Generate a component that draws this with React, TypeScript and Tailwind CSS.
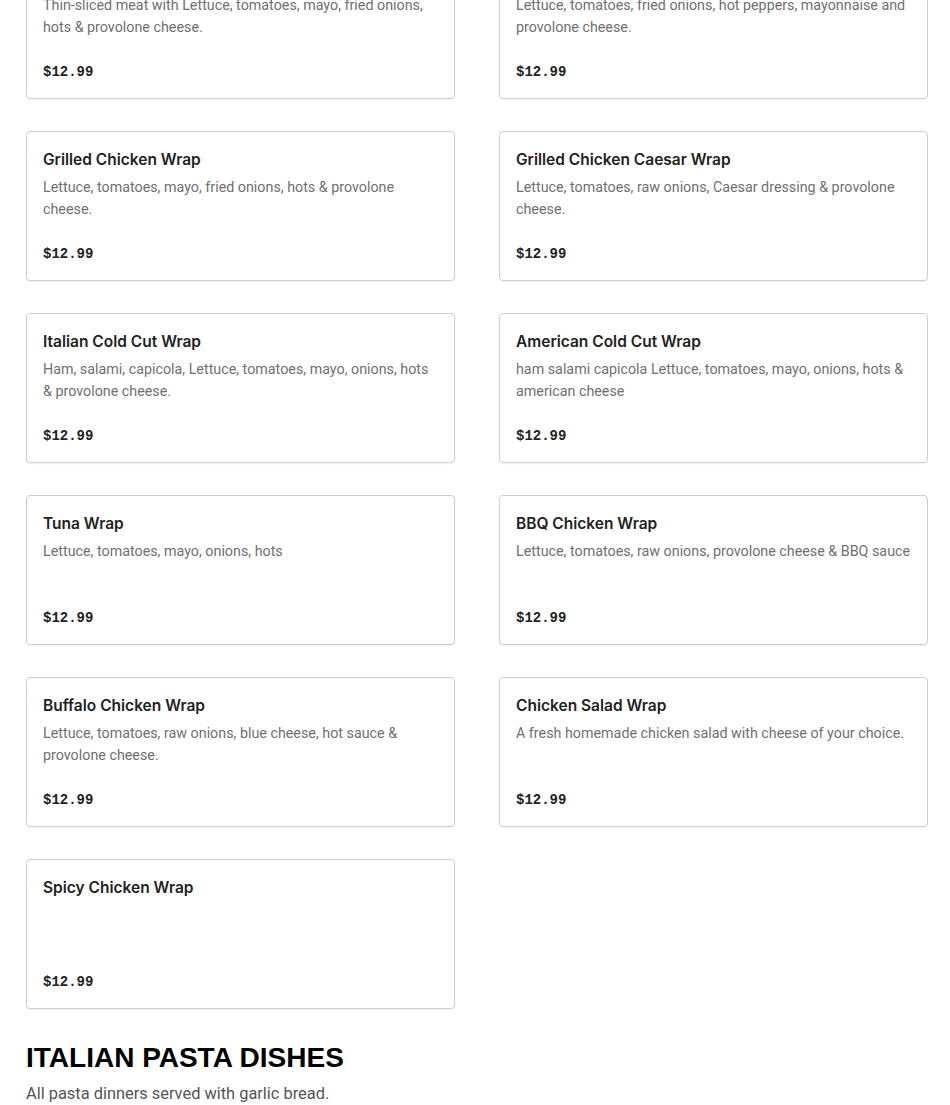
const wraps = [
  {
    name: 'Philly Cheesesteak Wrap',
    desc: 'Thin-sliced meat with Lettuce, tomatoes, mayo, fried onions, hots & provolone cheese.',
  },
  {
    name: 'Chicken Cheesesteak Wrap',
    desc: 'Lettuce, tomatoes, fried onions, hot peppers, mayonnaise and provolone cheese.',
  },
  { name: 'Grilled Chicken Wrap', desc: 'Lettuce, tomatoes, mayo, fried onions, hots & provolone cheese.' },
  { name: 'Grilled Chicken Caesar Wrap', desc: 'Lettuce, tomatoes, raw onions, Caesar dressing & provolone cheese.' },
  { name: 'Italian Cold Cut Wrap', desc: 'Ham, salami, capicola, Lettuce, tomatoes, mayo, onions, hots & provolone cheese.' },
  { name: 'American Cold Cut Wrap', desc: 'ham salami capicola Lettuce, tomatoes, mayo, onions, hots & american cheese' },
  { name: 'Tuna Wrap', desc: 'Lettuce, tomatoes, mayo, onions, hots' },
  { name: 'BBQ Chicken Wrap', desc: 'Lettuce, tomatoes, raw onions, provolone cheese & BBQ sauce' },
  { name: 'Buffalo Chicken Wrap', desc: 'Lettuce, tomatoes, raw onions, blue cheese, hot sauce & provolone cheese.' },
  { name: 'Chicken Salad Wrap', desc: 'A fresh homemade chicken salad with cheese of your choice.' },
  { name: 'Spicy Chicken Wrap', desc: '' },
]

function MenuCard({ name, desc }: { name: string; desc: string }) {
  return (
    <div className="flex h-[150px] flex-col rounded-[4px] border border-[#cfcfcf] bg-white px-4 pt-[16px] pb-[15px] shadow-[0_1px_2px_rgba(0,0,0,0.06)]">
      <h3 className="font-['Inter',sans-serif] text-[15.5px] leading-[24px] font-semibold text-[#222]">{name}</h3>
      {desc && <p className="mt-[4px] text-[14.3px] leading-[22px] text-[#707070]">{desc}</p>}
      <div className="mt-auto font-['Liberation_Mono',monospace] text-[14px] leading-[22px] font-bold text-[#222]">$12.99</div>
    </div>
  )
}

export default function App() {
  return (
    <div className="min-h-screen bg-white font-['Roboto',sans-serif]">
      <div className="-mt-[51px] pl-[26px] pr-[22px]">
        <div className="grid grid-cols-2 gap-x-[44px] gap-y-[32px]">
          {wraps.map((w) => (
            <MenuCard key={w.name} {...w} />
          ))}
        </div>

        <h2 className="mt-[35px] font-['Liberation_Sans',sans-serif] text-[28px] leading-[28px] font-black text-black uppercase">
          Italian Pasta Dishes
        </h2>
        <p className="mt-[10px] text-[16.4px] leading-[24px] text-[#555]">All pasta dinners served with garlic bread.</p>
      </div>
    </div>
  )
}
